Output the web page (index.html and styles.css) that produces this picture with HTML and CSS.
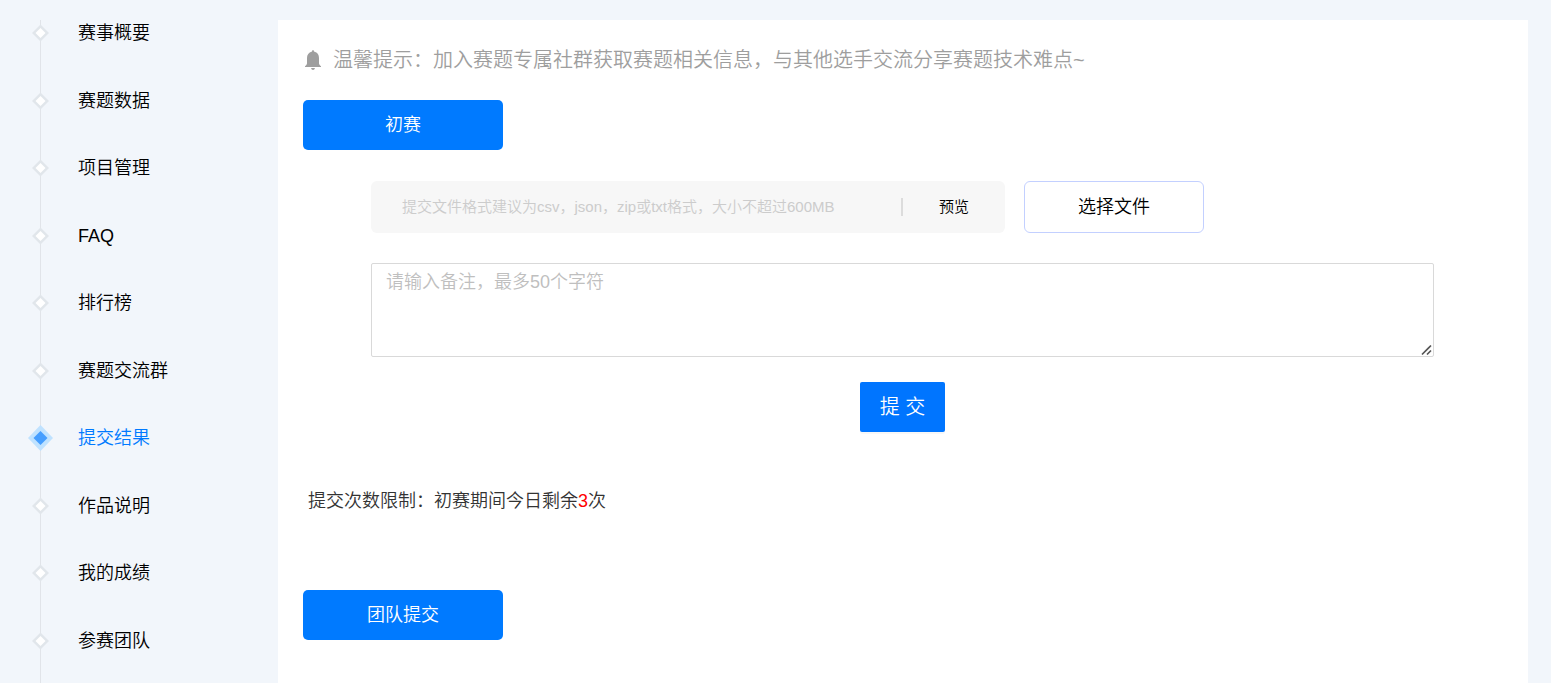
FILE: index.html
```html
<!DOCTYPE html>
<html lang="zh-CN">
<head>
<meta charset="utf-8">
<title>提交结果</title>
<link rel="stylesheet" href="styles.css">
</head>
<body>
<svg class="sprites" aria-hidden="true">
  <symbol id="dot" viewBox="0 0 26 26">
    <path d="M13.500 4.500L22 13L13.500 21.500L5 13Z" fill="#e1e6eb"/>
    <path d="M13.500 8L18.500 13L13.500 18L8.500 13Z" fill="#fff"/>
  </symbol>
  <symbol id="dot-active" viewBox="0 0 26 26">
    <path d="M13.500 0L26 13L13.500 26L1 13Z" fill="#bfe2ff"/>
    <path d="M13.500 6L20.500 13L13.500 20L6.500 13Z" fill="#459eff"/>
  </symbol>
</svg>
<div class="page">
  <nav class="sidebar">
    <ul class="steps">
      <li><a class="step" href="#"><svg class="marker"><use href="#dot"/></svg>赛事概要</a></li>
      <li><a class="step" href="#"><svg class="marker"><use href="#dot"/></svg>赛题数据</a></li>
      <li><a class="step" href="#"><svg class="marker"><use href="#dot"/></svg>项目管理</a></li>
      <li><a class="step" href="#"><svg class="marker"><use href="#dot"/></svg>FAQ</a></li>
      <li><a class="step" href="#"><svg class="marker"><use href="#dot"/></svg>排行榜</a></li>
      <li><a class="step" href="#"><svg class="marker"><use href="#dot"/></svg>赛题交流群</a></li>
      <li><a class="step active" href="#" aria-current="page"><svg class="marker"><use href="#dot-active"/></svg>提交结果</a></li>
      <li><a class="step" href="#"><svg class="marker"><use href="#dot"/></svg>作品说明</a></li>
      <li><a class="step" href="#"><svg class="marker"><use href="#dot"/></svg>我的成绩</a></li>
      <li><a class="step" href="#"><svg class="marker"><use href="#dot"/></svg>参赛团队</a></li>
    </ul>
  </nav>
  <main class="panel">
    <p class="tip">
      <svg class="bell" viewBox="0 0 20 20" aria-hidden="true"><path fill="#9e9e9e" d="M10 0Q11 0 11 1.500C14.500 2.300 16 5 16 8V13.500Q16.200 15 18 16.300V17H2V16.300Q3.800 15 4 13.500V8C4 5 5.500 2.300 9 1.500Q9 0 10 0ZM8 18H12Q11.500 20 10 20Q8.500 20 8 18Z"/></svg>
      <span>温馨提示：加入赛题专属社群获取赛题相关信息，与其他选手交流分享赛题技术难点~</span>
    </p>
    <button class="stage" type="button">初赛</button>
    <form class="upload">
      <div class="file-row">
        <div class="file-box">
          <input class="file-name" type="text" readonly aria-label="提交文件" placeholder="提交文件格式建议为csv，json，zip或txt格式，大小不超过600MB">
          <button class="preview" type="button">预览</button>
        </div>
        <button class="choose" type="button">选择文件</button>
      </div>
      <textarea class="note" aria-label="备注" placeholder="请输入备注，最多50个字符"></textarea>
      <button class="submit" type="button">提 交</button>
    </form>
    <p class="limit">提交次数限制：初赛期间今日剩余<span class="count">3</span>次</p>
    <button class="stage" type="button">团队提交</button>
  </main>
</div>
</body>
</html>
```
FILE: styles.css
```css
* {
  box-sizing: border-box;
}

body {
  margin: 0;
  background: #f2f6fb;
  color: #000;
  font: 350 18px/1.25 "Liberation Sans", "Noto Sans CJK SC", sans-serif;
}

button,
input,
textarea {
  margin: 0;
  padding: 0;
  border: 0;
  color: inherit;
  font: inherit;
}

button {
  cursor: pointer;
}

.sprites {
  display: none;
}

.page {
  display: flex;
  min-height: 100vh;
  padding: 20px 23px 0 0;
}

.sidebar {
  flex: 0 0 278px;
  padding-left: 27px;
}

.steps {
  display: flex;
  flex-direction: column;
  gap: 45px;
  min-height: 100%;
  margin: 0;
  padding: 2px 0 0;
  list-style: none;
  background: linear-gradient(#e1e4e9, #e1e4e9) 13px 0 / 1px 100% no-repeat;
}

.step {
  display: flex;
  align-items: center;
  gap: 25px;
  color: #000;
  text-decoration: none;
}

.step.active {
  color: #007aff;
}

.marker {
  width: 26px;
  height: 26px;
  margin: -2px 0;
}

.panel {
  flex: 1;
  min-width: 0;
  padding: 25px 25px 43px;
  background: #fff;
}

.tip {
  display: flex;
  align-items: center;
  gap: 10px;
  margin: 0 0 25px;
  color: #9e9e9e;
  font-size: 20px;
  line-height: 30px;
}

.bell {
  width: 20px;
  height: 20px;
}

.stage {
  display: block;
  width: 200px;
  height: 50px;
  border-radius: 5px;
  background: #007aff;
  color: #fff;
}

.upload {
  display: flex;
  flex-direction: column;
  padding: 31px 69px 0 68px;
}

.file-row {
  display: flex;
  gap: 19px;
  margin-bottom: 30px;
}

.file-box {
  display: flex;
  align-items: center;
  flex: 0 1 634px;
  height: 52px;
  padding: 0 0 0 31px;
  border-radius: 6px;
  background: #f7f7f7;
  font-size: 15px;
}

.file-name {
  flex: 1;
  min-width: 0;
  background: transparent;
}

.file-name::placeholder {
  color: #ccc;
}

.preview {
  width: 104px;
  height: 18px;
  border-left: 2px solid #dcdcdc;
  background: transparent;
  line-height: 18px;
}

.choose {
  width: 180px;
  height: 52px;
  border: 1px solid #c3d0ff;
  border-radius: 6px;
  background: #fff;
}

.note {
  display: block;
  height: 94px;
  padding: 5px 14px;
  border: 1px solid #d9d9d9;
  border-radius: 2px;
  background: #fff;
  line-height: 26px;
  resize: vertical;
}

.note::placeholder {
  color: #bfbfbf;
}

.note::-webkit-resizer {
  background: url("data:image/svg+xml,%3Csvg xmlns='http://www.w3.org/2000/svg' width='15' height='15'%3E%3Cpath d='M4 13.500L13 4.500M9 13.500L13 9.500' stroke='%23555' stroke-width='1.700' stroke-dasharray='9 0'/%3E%3C/svg%3E") right bottom no-repeat;
}

.submit {
  align-self: center;
  width: 85px;
  height: 50px;
  margin-top: 25px;
  border-radius: 2px;
  background: #0075ff;
  box-shadow: 0 2px 0 rgba(0, 0, 0, 0.03);
  color: #fff;
  font-size: 20px;
}

.limit {
  margin: 54px 0 74px;
  padding-left: 5px;
  color: #333;
  line-height: 30px;
}

.count {
  color: #f00;
}
```
